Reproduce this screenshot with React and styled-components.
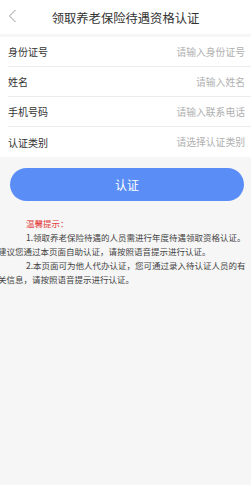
import React from 'react';
import styled, { createGlobalStyle } from 'styled-components';

const FIELDS = [
  { label: '身份证号', placeholder: '请输入身份证号' },
  { label: '姓名', placeholder: '请输入姓名' },
  { label: '手机号码', placeholder: '请输入联系电话' },
  { label: '认证类别', placeholder: '请选择认证类别' },
];

const TIPS = [
  '1.领取养老保险待遇的人员需进行年度待遇领取资格认证。建议您通过本页面自助认证，请按照语音提示进行认证。',
  '2.本页面可为他人代办认证，您可通过录入待认证人员的有关信息，请按照语音提示进行认证。',
];

export default function App() {
  return (
    <>
      <GlobalStyle />
      <Page>
        <Header>
          <BackButton>
            <svg width="9" height="14" viewBox="0 0 9 14">
              <polyline points="7.5,1 1.5,7 7.5,13" fill="none" stroke="#9a9a9a" strokeWidth="1" />
            </svg>
          </BackButton>
          <Title>领取养老保险待遇资格认证</Title>
        </Header>

        <Form>
          {FIELDS.map(field => (
            <Row key={field.label}>
              <Label>{field.label}</Label>
              <Input placeholder={field.placeholder} />
            </Row>
          ))}
        </Form>

        <SubmitBtn>认证</SubmitBtn>

        <Tips>
          <TipTitle>温馨提示：</TipTitle>
          {TIPS.map(tip => (
            <TipText key={tip}>{tip}</TipText>
          ))}
        </Tips>
      </Page>
    </>
  );
}

const GlobalStyle = createGlobalStyle`
  html, body {
    margin: 0;
    padding: 0;
    background: #f6f6f6;
    font-family: "Noto Sans CJK SC", "Noto Sans", sans-serif;
  }
  * {
    box-sizing: border-box;
  }
`;

const Page = styled.div`
  width: 251px;
  min-height: 485px;
  background: #f6f6f6;
  overflow: hidden;
`;

const Header = styled.div`
  position: relative;
  height: 34px;
  display: flex;
  align-items: center;
  justify-content: center;
  background: #fff;
`;

const BackButton = styled.div`
  position: absolute;
  left: 8px;
  top: 9px;
  display: flex;
`;

const Title = styled.h1`
  margin: 0;
  font-size: 12.3px;
  font-weight: 400;
  color: #333;
  padding-top: 1px;
`;

const Form = styled.div`
  margin-top: 3px;
  background: #fff;
`;

const Row = styled.div`
  height: 30px;
  display: flex;
  align-items: center;
  justify-content: space-between;
  margin-left: 8px;
  padding-right: 6px;
  border-bottom: 1px solid #ededed;

  &:last-child {
    border-bottom: none;
  }
`;

const Label = styled.span`
  font-size: 10px;
  color: #333;
  white-space: nowrap;
`;

const Input = styled.input`
  flex: 1;
  min-width: 0;
  border: none;
  outline: none;
  background: transparent;
  text-align: right;
  font-family: inherit;
  font-size: 9.8px;
  color: #333;
  padding: 0;

  &::placeholder {
    color: #b0b0b0;
  }
`;

const SubmitBtn = styled.button`
  display: block;
  width: 234px;
  height: 33px;
  margin: 11px 0 0 10px;
  border: none;
  border-radius: 17px;
  background: #5a8df6;
  color: #fff;
  font-family: inherit;
  font-size: 12px;
`;

const Tips = styled.div`
  margin: 15px 0 0 -2px;
  width: 254px;
  font-size: 8.5px;
  line-height: 14px;
  color: #444;
`;

const TipTitle = styled.p`
  margin: 0;
  text-indent: 28px;
  color: #e23b3b;
`;

const TipText = styled.p`
  margin: 0;
  text-indent: 28px;
`;
